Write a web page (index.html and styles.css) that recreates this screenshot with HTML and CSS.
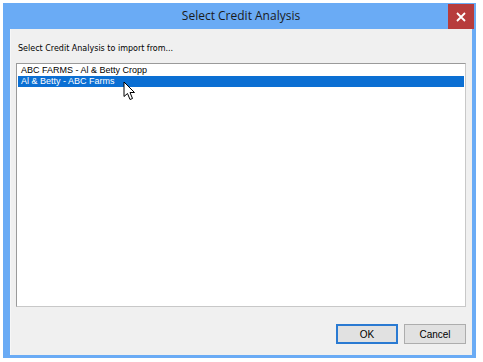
FILE: index.html
```html
<!DOCTYPE html>
<html>
<head>
<meta charset="utf-8">
<link rel="stylesheet" href="styles.css">
</head>
<body>
<div class="window">
  <div class="titlebar">
    <div class="title">Select Credit Analysis</div>
    <div class="close">
      <svg width="10" height="10" viewBox="0 0 10 10"><path d="M1 1 L9 9 M9 1 L1 9" stroke="#fff" stroke-width="1.8"/></svg>
    </div>
  </div>
  <div class="client">
    <div class="label">Select Credit Analysis to import from...</div>
    <div class="listbox">
      <div class="item">ABC FARMS - Al &amp; Betty Cropp</div>
      <div class="item selected">Al &amp; Betty - ABC Farms</div>
      <svg class="cursor" width="14" height="20" viewBox="0 0 14 20"><path d="M1 1 L1 15.5 L4.5 12.5 L7 18.5 L9.5 17.5 L7 11.5 L11.5 11.5 Z" fill="#fff" stroke="#000" stroke-width="1" stroke-linejoin="miter"/></svg>
    </div>
    <div class="buttons">
      <div class="btn default">OK</div>
      <div class="btn">Cancel</div>
    </div>
  </div>
</div>
</body>
</html>
```
FILE: styles.css
```css
html, body {
  margin: 0;
  padding: 0;
  background: #fff;
}
body {
  padding: 3px;
  font-family: "Liberation Sans", Arial, sans-serif;
}
.window {
  width: 473px;
  height: 355px;
  box-sizing: border-box;
  background: #6aabf5;
  padding: 0 4px 3px 7px;
  display: flex;
  flex-direction: column;
}
.titlebar {
  height: 26px;
  display: flex;
  position: relative;
  margin-right: -2px;
}
.title {
  flex: 1;
  text-align: center;
  font-family: "Open Sans", "Noto Sans", sans-serif;
  font-size: 12px;
  line-height: 26px;
  color: #1a1a1a;
  padding-left: 24px;
}
.close {
  width: 26px;
  height: 25px;
  margin-top: 1px;
  background: #b73c3c;
  display: flex;
  align-items: center;
  justify-content: center;
}
.client {
  flex: 1;
  background: #f0f0f0;
  border-left: 1px solid #f7f7f7;
  display: flex;
  flex-direction: column;
  padding: 14px 6px 0 5px;
}
.label {
  font-family: "DejaVu Sans", sans-serif;
  font-size: 8px;
  color: #000;
  line-height: 12px;
  padding-left: 2px;
  height: 20px;
}
.listbox {
  position: relative;
  height: 244px;
  box-sizing: border-box;
  background: #fff;
  border: 1px solid #9a9a9a;
  border-right-color: #c8c8c8;
  border-bottom-color: #c8c8c8;
  padding: 1px 1px 0 1px;
}
.item {
  height: 11px;
  line-height: 11px;
  font-size: 9px;
  color: #000;
  padding-left: 3px;
  white-space: nowrap;
}
.item.selected {
  background: #0b6fd3;
  color: #fff;
}
.cursor {
  position: absolute;
  left: 106px;
  top: 17px;
}
.buttons {
  display: flex;
  justify-content: flex-end;
  gap: 6px;
  margin-top: 17px;
}
.btn {
  width: 62px;
  height: 20px;
  box-sizing: border-box;
  background: #e1e1e1;
  border: 1px solid #adadad;
  font-size: 10px;
  display: flex;
  align-items: center;
  justify-content: center;
  color: #000;
}
.btn.default {
  border: 2px solid #2a7ad2;
}
```
